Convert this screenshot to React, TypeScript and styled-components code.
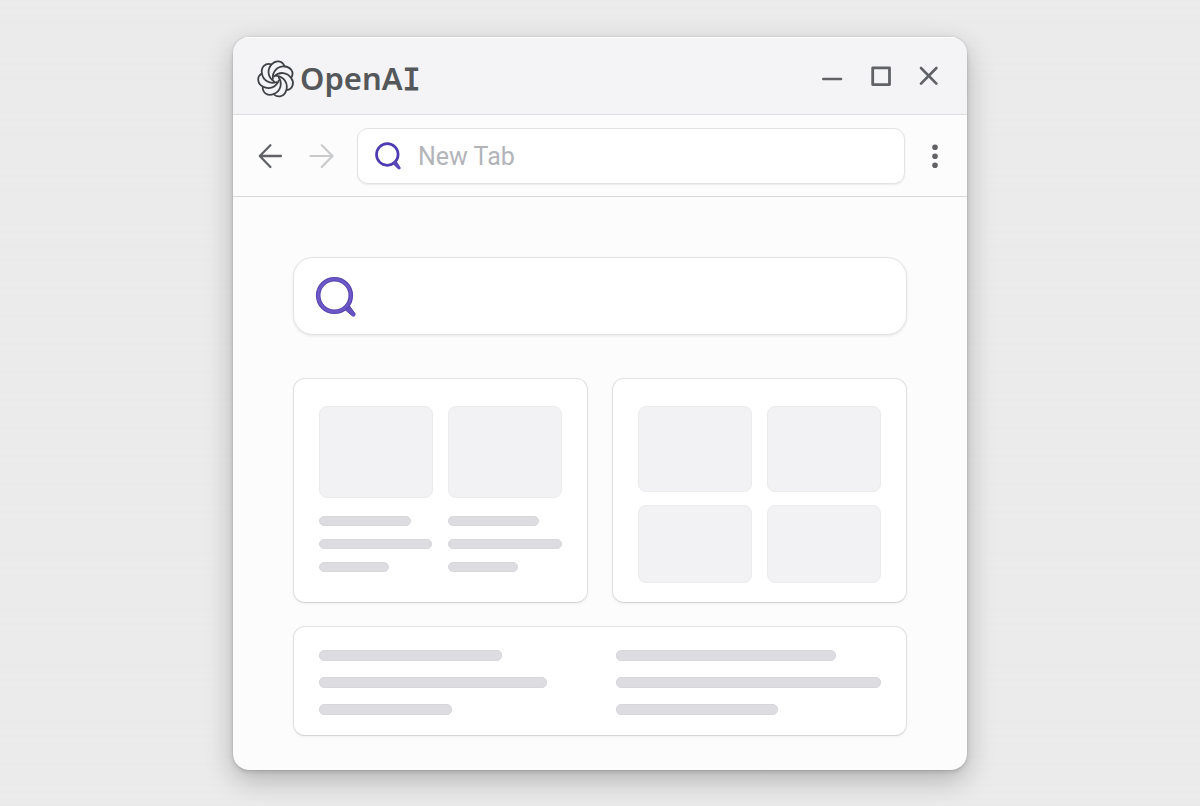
import React from "react";
import styled, { createGlobalStyle } from "styled-components";

const GlobalStyle = createGlobalStyle`
  *, *::before, *::after { box-sizing: border-box; }
  body {
    margin: 0;
    min-height: 100vh;
    background:
      repeating-linear-gradient(180deg, rgba(0, 0, 0, 0.004) 0 2px, transparent 2px 7px),
      #ebebec;
    font-family: Roboto, "Liberation Sans", sans-serif;
  }
`;

const Desktop = styled.div`
  padding: 37px 24px 36px;
`;

const Window = styled.div`
  max-width: 734px;
  margin: 0 auto;
  border-radius: 16px;
  overflow: hidden;
  background: #fcfcfc;
  box-shadow: 0 0 1px rgba(0, 0, 0, 0.35), 0 2px 5px rgba(0, 0, 0, 0.14),
    0 10px 28px rgba(0, 0, 0, 0.24);
`;

const TitleBar = styled.header`
  display: flex;
  align-items: center;
  justify-content: space-between;
  height: 78px;
  padding: 0 24px;
  background: #f4f4f6;
  border-top: 1px solid #ffffff;
  border-bottom: 1px solid #dfdfe1;
`;

const Brand = styled.div`
  display: flex;
  align-items: center;
  gap: 5px;
  padding-top: 6px;
`;

const BrandName = styled.span`
  font-family: "Noto Sans", sans-serif;
  font-size: 31px;
  font-weight: 600;
  line-height: 36px;
  color: #55585a;
`;

const SerifLetter = styled.span`
  font-family: "DejaVu Sans Mono", monospace;
  font-size: 30px;
  font-weight: 400;
  -webkit-text-stroke: 1px currentColor;
`;

const WindowControls = styled.div`
  display: flex;
  gap: 20px;
`;

const IconButton = styled.button<{ $width: number }>`
  display: flex;
  align-items: center;
  justify-content: center;
  width: ${(p) => p.$width}px;
  height: 28px;
  padding: 0;
  border: 0;
  background: none;
  color: #606266;
  cursor: pointer;

  &:disabled {
    color: #c9cacc;
    cursor: default;
  }
`;

const Toolbar = styled.div`
  display: flex;
  align-items: center;
  gap: 16px;
  height: 82px;
  padding: 0 18px 0 24px;
  border-bottom: 1px solid #d9d9db;
`;

const NavButtons = styled.div`
  display: flex;
  gap: 25px;
  padding-right: 7px;
`;

const Address = styled.label`
  display: flex;
  flex: 1;
  align-items: center;
  gap: 16px;
  min-width: 0;
  height: 56px;
  padding: 0 16px;
  border: 1px solid #e3e3e5;
  border-radius: 11px;
  background: #ffffff;
  box-shadow: 0 1px 2px rgba(0, 0, 0, 0.07);
`;

const TextInput = styled.input`
  flex: 1;
  min-width: 0;
  padding: 2px 0 0;
  border: 0;
  outline: 0;
  background: none;
  font-family: inherit;
  font-size: 25px;
  line-height: 32px;
  color: #55585b;

  &::placeholder {
    color: #b2b4b9;
    opacity: 1;
  }
`;

const Page = styled.main`
  padding: 60px 60px 34px;
`;

const SearchBox = styled(Address)`
  height: 78px;
  margin-bottom: 43px;
  padding: 2px 20px 0;
  border-radius: 20px;
  box-shadow: 0 1px 3px rgba(0, 0, 0, 0.09);
`;

const CardRow = styled.div`
  display: grid;
  grid-template-columns: 1fr 1fr;
  gap: 24px;
  margin-bottom: 23px;
`;

const Card = styled.section`
  padding: 27px 25px 19px;
  border: 1px solid #e0e0e2;
  border-bottom-color: #d5d5d7;
  border-radius: 12px;
  background: #ffffff;
  box-shadow: 0 1px 3px rgba(0, 0, 0, 0.05);
`;

const Articles = styled.div`
  display: grid;
  grid-template-columns: 1fr 1fr;
  gap: 15px;
  padding-bottom: 11px;
`;

const TileGrid = styled.div`
  display: grid;
  grid-template-columns: 1fr 1fr;
  gap: 13px 15px;
`;

const Tile = styled.div<{ $height: number }>`
  height: ${(p) => p.$height}px;
  border: 1px solid #ebebed;
  border-radius: 8px;
  background: #f2f2f4;
`;

const Lines = styled.div<{ $gap: number }>`
  display: flex;
  flex-direction: column;
  gap: ${(p) => p.$gap}px;
`;

const ArticleLines = styled(Lines)`
  margin-top: 18px;
`;

const Line = styled.div<{ $width: number; $height: number }>`
  width: ${(p) => p.$width}%;
  height: ${(p) => p.$height}px;
  border: 1px solid #d7d7db;
  border-radius: 5px;
  background: #dddde1;
`;

const WideCard = styled(Card)`
  display: grid;
  grid-template-columns: 1fr 1fr;
  gap: 32px;
  padding: 23px 25px 20px;
`;

const strands = [0, 1, 2, 3, 4, 5, 6];

function Logo() {
  return (
    <svg width="38" height="38" viewBox="-19 -19 38 38" fill="none" stroke="#3f4245" strokeWidth="1.8" strokeLinecap="round" aria-hidden="true">
      {strands.map((i) => (
        <path key={i} transform={`rotate(${(i * 360) / 7 - 18})`} d="M-2.6 1.8 C-7.4 -4 -6 -11.6 0.3 -15.2 C5.4 -18.2 11.6 -16 12.1 -9.6" />
      ))}
    </svg>
  );
}

function SmallSearchIcon() {
  return (
    <svg width="28" height="30" viewBox="0 0 28 30" fill="none" aria-hidden="true">
      <circle cx="13.3" cy="13.5" r="10.8" stroke="#4d3bb2" strokeWidth="2.7" />
      <path d="M17.6 21.8 L21.6 18.8 L26.6 26.4 C27 28 25.2 29 24 28 Z" fill="#5846ba" />
    </svg>
  );
}

function LargeSearchIcon() {
  return (
    <svg width="44" height="44" viewBox="0 0 44 44" fill="none" aria-hidden="true">
      <path d="M30.6 34.2 L35.2 30.6 L41 38.6 C41.8 40.8 39.4 42 38 40.6 Z" fill="#6753c2" stroke="#5643af" />
      <circle cx="20.5" cy="20.5" r="16.3" stroke="#5643af" strokeWidth="4.6" />
      <circle cx="20.5" cy="20.5" r="16.3" stroke="#6c58c6" strokeWidth="2.6" />
    </svg>
  );
}

function TextLines({ widths, height }: { widths: number[]; height: number }) {
  return (
    <>
      {widths.map((w, i) => (
        <Line key={i} $width={w} $height={height} />
      ))}
    </>
  );
}

const stroke = { fill: "none", stroke: "currentColor", strokeLinecap: "round", strokeLinejoin: "round" } as const;

export default function App() {
  return (
    <>
      <GlobalStyle />
      <Desktop>
        <Window>
          <TitleBar>
            <Brand>
              <Logo />
              <BrandName>
                OpenA<SerifLetter>I</SerifLetter>
              </BrandName>
            </Brand>
            <WindowControls>
              <IconButton $width={28} aria-label="Minimize">
                <svg width="28" height="28" {...stroke} strokeWidth="2.6">
                  <path d="M4.3 17H22" />
                </svg>
              </IconButton>
              <IconButton $width={28} aria-label="Maximize">
                <svg width="28" height="28" {...stroke} strokeWidth="2.8">
                  <rect x="5.7" y="5.8" width="16.8" height="16.8" />
                </svg>
              </IconButton>
              <IconButton $width={28} aria-label="Close">
                <svg width="28" height="28" {...stroke} strokeWidth="2.7">
                  <path d="M6 6L21.4 21.6M21.4 6L6 21.6" />
                </svg>
              </IconButton>
            </WindowControls>
          </TitleBar>
          <Toolbar>
            <NavButtons>
              <IconButton $width={26} aria-label="Back">
                <svg width="26" height="28" {...stroke} strokeWidth="2.3">
                  <path d="M2.8 14H24M13.4 3.2L2.8 14L13.4 25" />
                </svg>
              </IconButton>
              <IconButton $width={26} aria-label="Forward" disabled>
                <svg width="26" height="28" {...stroke} strokeWidth="2.2">
                  <path d="M2.5 14H24.5M13.8 3.2L24.5 14L13.8 25" />
                </svg>
              </IconButton>
            </NavButtons>
            <Address>
              <SmallSearchIcon />
              <TextInput type="text" placeholder="New Tab" aria-label="Address" />
            </Address>
            <IconButton $width={28} aria-label="Menu">
              <svg width="28" height="28" fill="currentColor">
                <circle cx="14" cy="5.2" r="2.8" />
                <circle cx="14" cy="14.2" r="2.8" />
                <circle cx="14" cy="23.2" r="2.8" />
              </svg>
            </IconButton>
          </Toolbar>
          <Page>
            <SearchBox>
              <LargeSearchIcon />
              <TextInput type="text" aria-label="Search" />
            </SearchBox>
            <CardRow>
              <Card>
                <Articles>
                  {[[81, 99, 61], [80, 100, 61]].map((widths, i) => (
                    <div key={i}>
                      <Tile $height={92} />
                      <ArticleLines $gap={13}>
                        <TextLines widths={widths} height={10} />
                      </ArticleLines>
                    </div>
                  ))}
                </Articles>
              </Card>
              <Card>
                <TileGrid>
                  <Tile $height={86} />
                  <Tile $height={86} />
                  <Tile $height={78} />
                  <Tile $height={78} />
                </TileGrid>
              </Card>
            </CardRow>
            <WideCard>
              <Lines $gap={16}>
                <TextLines widths={[69, 86, 50]} height={11} />
              </Lines>
              <Lines $gap={16}>
                <TextLines widths={[83, 100, 61]} height={11} />
              </Lines>
            </WideCard>
          </Page>
        </Window>
      </Desktop>
    </>
  );
}
